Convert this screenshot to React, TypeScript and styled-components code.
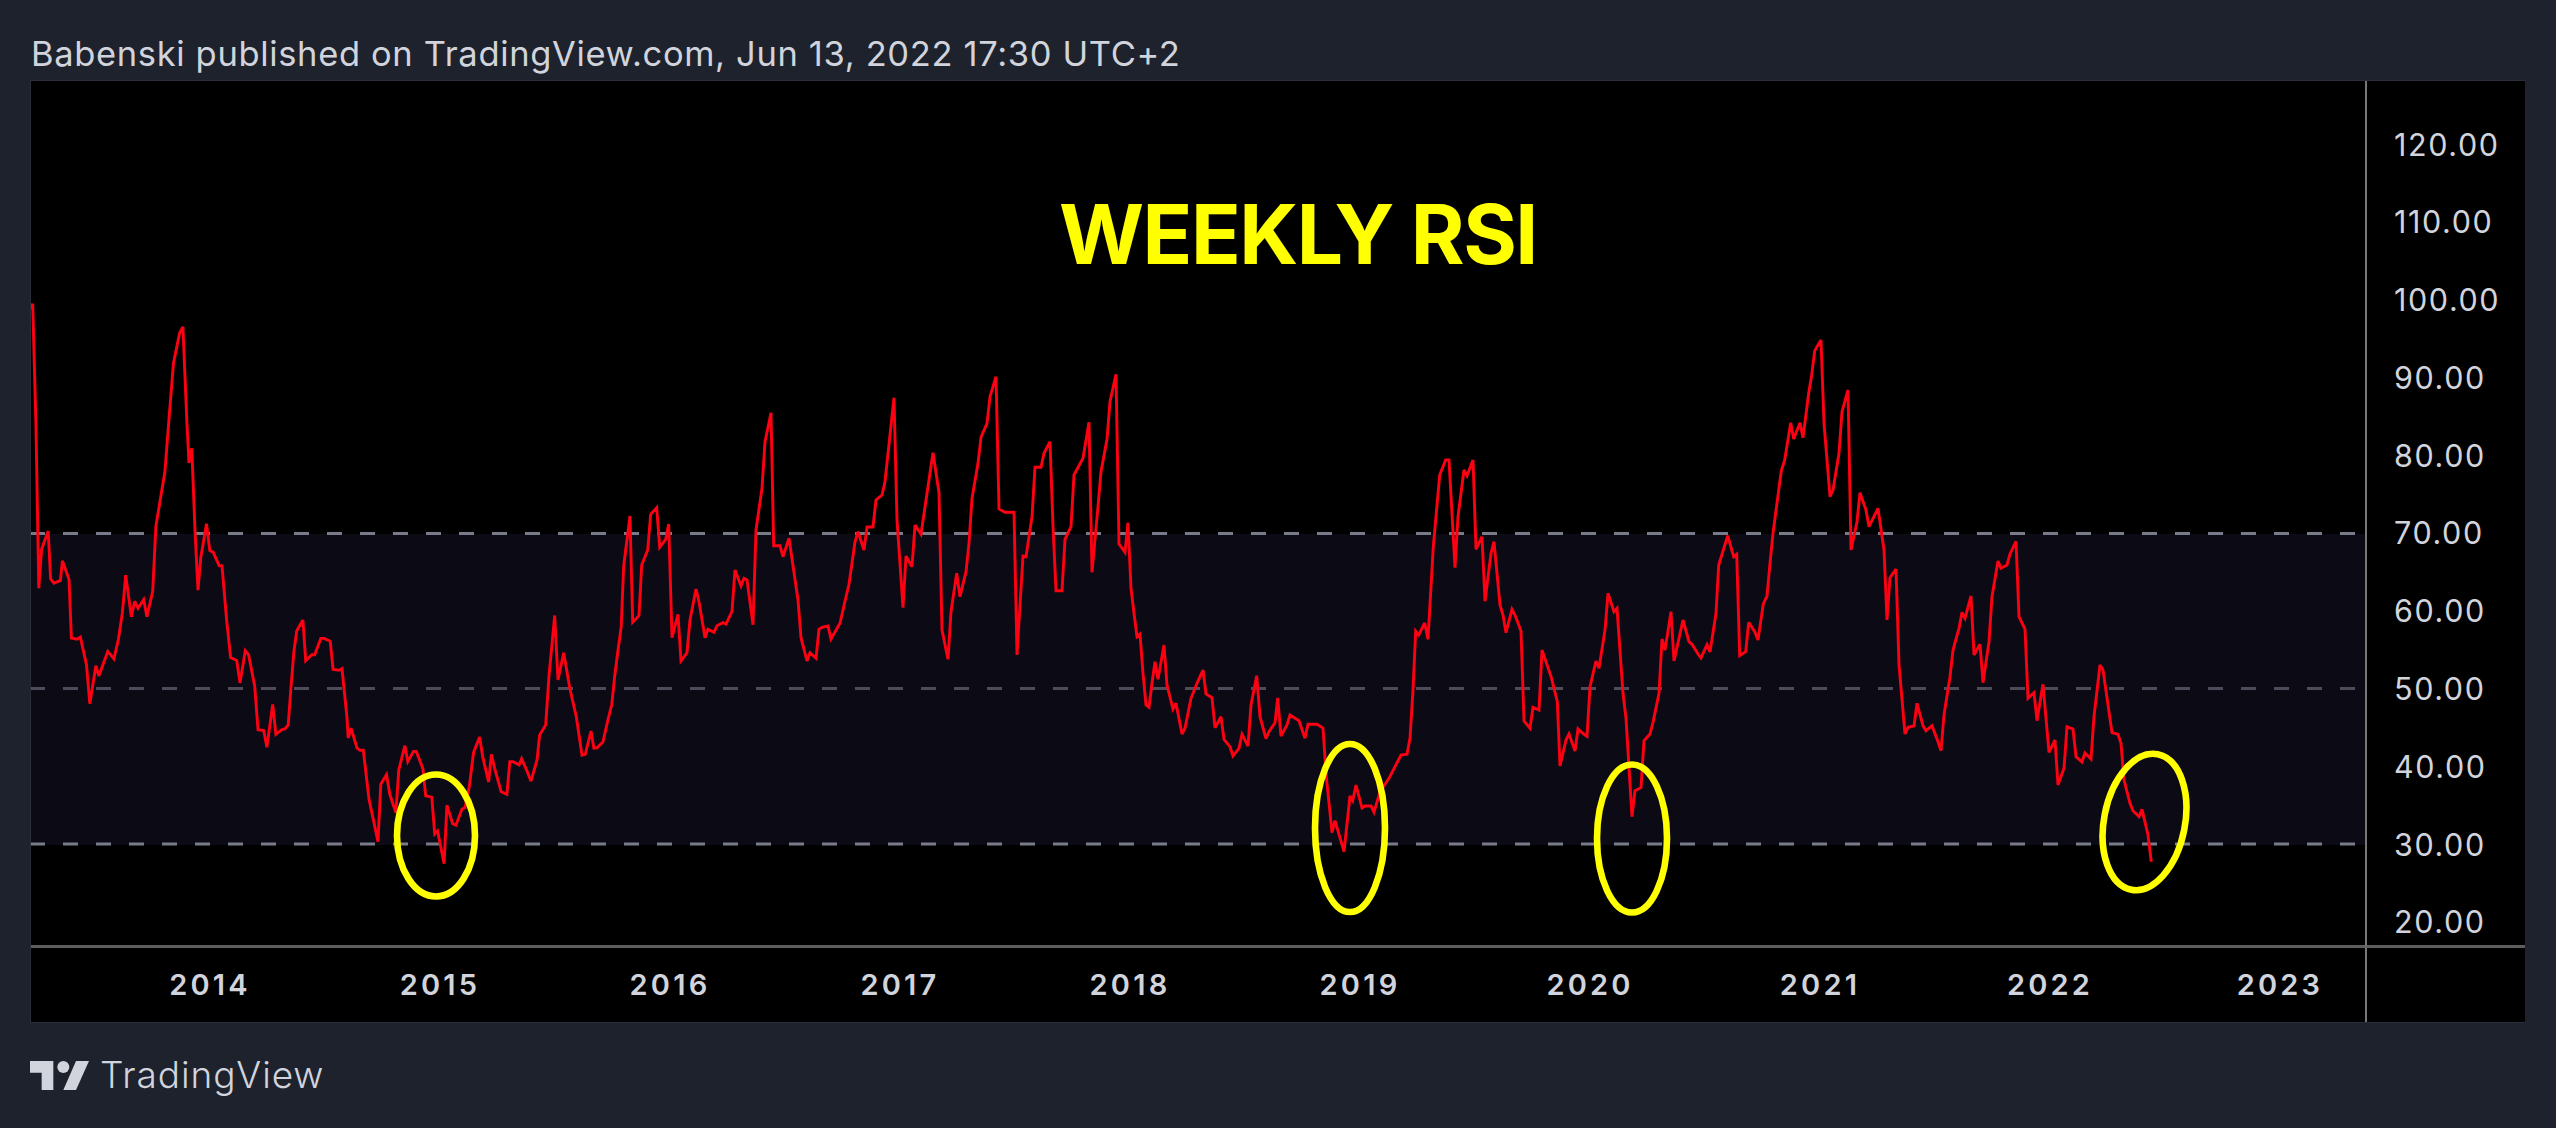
import React from "react";
import styled, { createGlobalStyle } from "styled-components";

const GlobalStyle = createGlobalStyle`
  html, body { margin: 0; padding: 0; background: #1e222d; }
  body { width: 2556px; height: 1128px; overflow: hidden; font-family: Inter, "Liberation Sans", sans-serif; }
`;

const Page = styled.div`
  width: 2556px;
  height: 1128px;
  background: #1e222d;
  display: flex;
  flex-direction: column;
  color: #d1d4dc;
`;

const Header = styled.div`
  height: 80px;
  padding: 28px 0 0 31px;
  box-sizing: border-box;
  font-size: 34.5px;
  line-height: 52px;
  font-weight: 400;
  letter-spacing: 0.65px;
  white-space: nowrap;
`;

const Frame = styled.div`
  width: 2495px;
  margin-left: 30px;
  height: 943px;
  box-sizing: border-box;
  border: 1px solid #2a2e39;
  border-right: none;
  background: #000;
  display: grid;
  grid-template-columns: 2334px 160px;
  grid-template-rows: 867px 74px;
`;

const Plot = styled.div`
  position: relative;
  overflow: hidden;
  border-bottom: 3px solid #5d5d5d;
  box-sizing: border-box;
  height: 867px;
`;

const PlotSvg = styled.svg`
  display: block;
`;

const Title = styled.div`
  position: absolute;
  left: 1028px;
  top: 109px;
  font-size: 82px;
  line-height: 90px;
  font-weight: 700;
  color: #ffff00;
  white-space: nowrap;
  letter-spacing: -1.5px;
`;

const PriceAxis = styled.div`
  border-left: 2px solid #787878;
  border-bottom: 3px solid #5d5d5d;
  padding: 24.5px 0 0 27px;
  display: flex;
  flex-direction: column;
  height: 867px;
  box-sizing: border-box;
  overflow: hidden;
`;

const PriceLabel = styled.div`
  height: 77.8px;
  flex: none;
  line-height: 77.8px;
  font-size: 30.5px;
  letter-spacing: 1.6px;
  color: #d1d4dc;
`;

const TimeAxis = styled.div`
  display: flex;
  padding-left: 64px;
`;

const YearCell = styled.div`
  width: 230px;
  flex: none;
  text-align: center;
  line-height: 74px;
  font-size: 29px;
  font-weight: 600;
  letter-spacing: 3.2px;
  color: #d1d4dc;
`;

const AxisCorner = styled.div`
  border-left: 2px solid #787878;
`;

const Footer = styled.div`
  display: flex;
  align-items: center;
  gap: 11px;
  padding: 32px 0 0 30px;
  height: 40px;
`;

const LogoMark = styled.svg`
  display: block;
  flex: none;
`;

const Brand = styled.div`
  font-size: 37px;
  line-height: 40px;
  font-weight: 300;
  letter-spacing: 0.9px;
  color: #d1d4dc;
`;

type P = [number, number];
const seg = (ox: number, oy: number, s: number, pts: P[]): P[] =>
  pts.map(([x, y]) => [ox + x / s, oy + y / s]);

const z6: P[] = [[75,70],[80,58],[88,350],[95,755],[102,660],[118,615],[124,732],[132,743],[148,736],[153,688],[169,733],[175,877],[189,880],[197,875],[212,943],[220,1038],[235,945],[242,970],[264,910],[279,928],[290,880],[300,815],[308,723],[322,825],[330,787],[338,804],[352,783],[360,825],[374,763],[382,603],[404,470],[414,340],[425,203],[440,130],[448,115],[458,350],[463,448],[470,412],[478,620],[485,760],[492,680],[506,597],[514,663],[522,667],[537,700],[544,700],[555,830],[565,925],[580,932],[588,987],[601,908],[609,918],[624,995],[632,1102],[646,1104],[654,1145],[668,1040],[676,1113],[690,1102],[698,1100],[706,1090],[712,1010],[720,910],[727,860],[742,833],[749,933],[764,918],[771,918],[786,878],[794,878],[809,885],[816,954],[831,956],[838,952],[850,1070],[853,1122],[860,1098],[875,1147],[882,1152],[890,1152],[904,1272],[926,1376],[933,1235],[947,1212],[955,1260],[970,1305],[977,1200],[992,1141],[999,1180],[1013,1155],[1020,1155],[1036,1197],[1043,1264],[1058,1267],[1065,1357],[1072,1350],[1088,1430],[1095,1287],[1109,1332],[1117,1336],[1132,1296],[1139,1293],[1150,1240],[1160,1158],[1175,1120],[1183,1170],[1197,1230],[1204,1162],[1212,1197],[1228,1254],[1242,1260],[1249,1180],[1257,1180],[1272,1188],[1278,1173],[1290,1200],[1301,1228],[1316,1175],[1322,1115],[1337,1090],[1345,970],[1359,822],[1367,980],[1381,913],[1396,1000],[1412,1070],[1426,1164],[1434,1162],[1448,1105],[1455,1147],[1463,1146],[1477,1132],[1490,1075],[1499,1040],[1506,970],[1515,900],[1522,850],[1528,700]];
const z7: P[] = [[0,528],[8,847],[27,827],[35,675],[53,630],[62,523],[80,503],[89,622],[107,598],[116,552],[126,893],[144,823],[153,963],[171,938],[180,840],[198,747],[207,785],[225,893],[234,868],[252,877],[261,857],[279,848],[288,852],[306,814],[315,690],[333,738],[342,715],[351,720],[369,854],[378,570],[396,445],[405,305],[423,218],[431,617],[450,617],[459,650],[477,595],[504,780],[513,893],[531,963],[540,938],[558,955],[567,868],[576,862],[594,858],[603,897],[630,850],[648,770],[657,733],[675,605],[684,575],[702,630],[711,561],[729,561],[738,480],[756,465],[765,425],[792,173],[801,540],[819,803],[828,648],[846,680],[855,555],[873,583],[909,338],[927,458],[936,870],[954,958]];
const z8: P[] = [[33,815],[50,700],[60,770],[78,695],[87,610],[96,475],[114,370],[123,292],[141,250],[150,170],[168,110],[177,507],[195,517],[222,517],[231,945],[249,648],[258,650],[276,530],[285,382],[303,382],[312,340],[330,305],[339,560],[348,752],[366,752],[375,598],[393,560],[402,405],[429,355],[447,247],[456,697],[474,500],[483,395],[501,298],[510,185],[528,103],[537,612],[555,637],[564,548],[573,745],[582,820],[591,890],[600,882],[609,1000],[618,1095],[627,1102],[636,1030],[645,965],[654,1018],[672,915],[681,1035],[699,1107],[708,1090],[726,1182],[735,1165],[753,1075],[771,1030],[789,990],[798,1062],[816,1073],[825,1163],[843,1130],[852,1198],[870,1220],[879,1248],[897,1225],[906,1183],[924,1218],[933,1095]];
const z9: P[] = [[20,407],[30,530],[48,596],[57,575],[75,548],[83,474],[93,588],[111,555],[120,525],[147,542],[165,595],[174,553],[201,553],[219,564],[228,700],[246,878],[255,842],[282,935],[300,768],[308,782],[318,735],[336,804],[345,798],[363,798],[372,817],[390,755],[417,715],[453,645],[471,643],[480,595],[489,450]];
const z10: P[] = [[47,573],[56,585],[74,549],[84,598],[100,320],[119,105],[137,60],[147,60],[165,383],[174,230],[192,90],[201,107],[219,60],[228,328],[246,290],[255,484],[273,340],[282,305],[300,495],[309,525],[318,578],[336,508],[345,525],[363,573],[372,843],[390,865],[399,802],[417,810],[426,630],[454,712],[472,785],[480,978],[498,900],[507,882],[525,933],[534,867],[552,883],[561,889],[570,740],[588,663],[597,685],[615,570],[624,460],[642,515],[651,505],[669,760],[678,835],[696,1130],[705,1052],[723,1043],[732,902],[750,882],[759,847],[777,760],[786,597],[795,630],[813,515],[822,663],[849,540],[867,605],[876,613],[894,642],[903,654],[921,614],[930,636],[948,520]];
const z11: P[] = [[26,705],[53,617],[71,680],[80,673],[89,977],[107,965],[116,877],[134,905],[144,930],[160,822],[171,798],[180,700],[189,610],[214,422],[224,390],[242,278],[251,327],[270,278],[279,323],[296,190],[305,135],[314,62],[333,30],[342,280],[360,500],[369,480],[387,370],[396,245],[414,180],[423,660],[441,575],[450,488],[468,540],[477,590],[504,535],[522,660],[531,870],[540,743],[558,717],[567,1005],[585,1212],[594,1192],[612,1188],[621,1120],[639,1187],[648,1202],[666,1187],[684,1235],[693,1262],[702,1155],[720,1040],[729,960],[747,895],[756,847],[765,865],[783,798],[792,975],[810,943],[819,1058],[837,935],[846,800],[864,693],[873,715],[891,705],[900,672],[918,634],[927,860],[945,897],[954,1105]];
const z12: P[] = [[402,488],[411,572],[429,463],[447,667],[465,630],[474,765],[492,715],[501,590],[519,597],[528,680],[546,696],[555,669],[573,687],[582,560],[600,405],[609,420],[636,608],[654,613],[663,640],[672,750],[690,820],[699,842],[717,860],[726,838],[744,915],[754,995]];

const rsi: P[] = [
  ...seg(0, 280, 2.45, z6),
  ...seg(630, 340, 3, z7),
  ...seg(940, 340, 3, z8),
  ...seg(1250, 540, 3, z9),
  ...seg(1400, 440, 3, z10),
  ...seg(1710, 330, 3, z11),
  ...seg(1900, 530, 3, z12),
];
const rsiPoints = rsi.map(([x, y]) => `${x.toFixed(1)},${y.toFixed(1)}`).join(" ");

const prices = ["120.00","110.00","100.00","90.00","80.00","70.00","60.00","50.00","40.00","30.00","20.00"];
const years = ["2014","2015","2016","2017","2018","2019","2020","2021","2022","2023"];

export default function App() {
  return (
    <Page>
      <GlobalStyle />
      <Header>Babenski published on TradingView.com, Jun 13, 2022 17:30 UTC+2</Header>
      <Frame>
        <Plot>
          <PlotSvg width="2334" height="864" viewBox="31 81 2334 864">
            <rect x="31" y="534" width="2334" height="311" fill="#0c0a15" />
            <g strokeWidth="3" strokeDasharray="15 18" fill="none">
              <line x1="30" x2="2356" y1="533.5" y2="533.5" stroke="#787b8a" />
              <line x1="30" x2="2356" y1="688.5" y2="688.5" stroke="#4e4c5b" />
              <line x1="30" x2="2356" y1="844" y2="844" stroke="#787b8a" />
            </g>
            <polyline points={rsiPoints} fill="none" stroke="#ff0012" strokeWidth="2.9" strokeLinejoin="miter" strokeMiterlimit="3" />
            <g fill="none" stroke="#ffff00" strokeWidth="6.6">
              <ellipse cx="436" cy="835.5" rx="39" ry="61" />
              <ellipse cx="1350" cy="828" rx="35" ry="84" />
              <ellipse cx="1632" cy="838.5" rx="35" ry="74" />
              <ellipse cx="2144.5" cy="822" rx="40.5" ry="69" transform="rotate(11 2144.5 822)" />
            </g>
          </PlotSvg>
          <Title>WEEKLY RSI</Title>
        </Plot>
        <PriceAxis>
          {prices.map((p) => (
            <PriceLabel key={p}>{p}</PriceLabel>
          ))}
        </PriceAxis>
        <TimeAxis>
          {years.map((y) => (
            <YearCell key={y}>{y}</YearCell>
          ))}
        </TimeAxis>
        <AxisCorner />
      </Frame>
      <Footer>
        <LogoMark width="59" height="29" viewBox="90 88 177 87" fill="#d1d4dc">
          <path d="M90 88H160V175H125V123H90Z" />
          <circle cx="190" cy="106" r="18" />
          <path d="M228 88H267L228 175H190Z" />
        </LogoMark>
        <Brand>TradingView</Brand>
      </Footer>
    </Page>
  );
}
